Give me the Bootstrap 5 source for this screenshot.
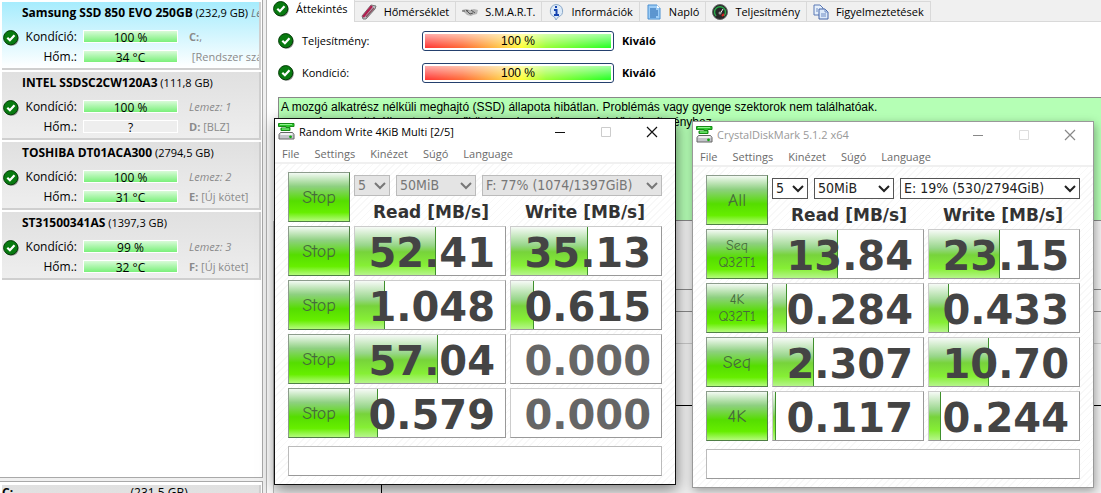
<!DOCTYPE html>
<html lang="hu">
<head>
<meta charset="utf-8">
<meta name="viewport" content="width=device-width, initial-scale=1">
<title>Hard Disk Sentinel – CrystalDiskMark</title>
<link href="https://cdn.jsdelivr.net/npm/bootstrap@5.3.0/dist/css/bootstrap.min.css" rel="stylesheet">
<style>
body{font-family:"Open Sans","Noto Sans",sans-serif;font-size:12px;line-height:16px;color:#000;background:#f0f0f0}
.ic{width:16px;height:16px;flex:none;display:block}
/* sidebar */
.side{width:263px;flex:none;gap:3px}
.pane{background:#fff;border:solid #a9a9a9;border-width:0 1px 1px 0}
.pane-top{padding-top:2px}
.pane-low{height:12px;border-width:1px 1px 0 0;padding:3px 1px 0 2px}
.drive{height:68px;background:linear-gradient(#e0e0e0,#eee);border:solid #cfcfcf;border-width:0 2px 2px 0;margin:0 1px 2px 2px;padding-top:3px}
.drive.active{background:linear-gradient(#a6ecfd,#fff)}
.drive-name{padding-left:20px;font-size:11px}
.drive-name b{font-size:12px}
.drive-grid{display:grid;grid-template-columns:16px 56px 100px 1fr;column-gap:2px;row-gap:4px;margin-top:8px;padding-left:1px}
.drive-grid .ic{grid-row:1/3;margin-top:1px}
.drive-grid .lbl{text-align:right}
.drive-grid .val{color:#8a8a8a;padding-left:8px;font-size:11px}
.bar{height:13px;margin:1px 1px 2px 4px;line-height:14px;text-align:center;background:linear-gradient(#d8fbd8,#7af07a);border:1px solid #fff}
.bar.unknown{background:#eee}
/* main */
.main{border-left:1px solid #b4b4b4;margin-left:3px;background:#fff}
.tabs{background:#f0f0f0;height:22px;border-bottom:1px solid #d9d9d9;font-size:11px}
.tabs a{color:#000;text-decoration:none;border:solid #d9d9d9;border-width:1px 1px 0 0;margin-top:1px;padding:0 6px;gap:7px}
.tabs a.on{background:#fff;margin:0 0 -1px;border-top:0;padding:0 6px 4px}
.health{display:grid;grid-template-columns:16px 112px 192px auto;column-gap:8px;row-gap:12px;padding:9px 0 0 11px;align-items:center;justify-content:start;font-size:11px}
.rate{height:20px;border:1px solid #24406e;border-radius:3px;padding:2px;background:#fff}
.rate div{height:14px;text-align:center;font:12px/14px "Liberation Sans",sans-serif;background:linear-gradient(rgba(255,255,255,.6),rgba(255,255,255,0)),linear-gradient(90deg,#f33,#ff6a33 20%,#fc4 42%,#ff3 52%,#9f3 65%,#2f2)}
.note{margin:14px 0 0 11px;height:124px;border:1px solid #888;border-right:0;background:#b5ffb5;font-family:"Liberation Sans",sans-serif;font-size:12px;line-height:15px;padding:2px 0 0 2px;white-space:nowrap}
.note .second{width:434px;text-align:right;margin:0}
.rest{background:#f0f0f0;margin-left:6px;border-left:1px solid #bbb}
.band{border-bottom:1px solid #888}
.band-1{height:69px}.band-2{height:22px}.band-3{height:32px;border-color:#c8c8c8}.band-4{height:62px;border-color:#000}
.plot{margin-left:107px;border-left:1px solid #000}
/* floating windows */
.win{position:absolute;width:402px;background:#fff;border:1px solid #111;box-shadow:1px 4px 14px rgba(0,0,0,.5)}
.win-a{left:274px;top:118px}
.win-b{left:692px;top:121px;border-color:#999;box-shadow:1px 3px 9px rgba(0,0,0,.35)}
.titlebar{height:25px;padding-left:3px;font-size:11px}
.titlebar button{width:46px;height:25px;border:0;background:none;padding:0;color:inherit}
.titlebar svg{display:block;margin:auto}
.win-b .titlebar{color:#999}
.menus{height:20px;border-bottom:2px solid #f0f0f0;gap:15px;padding:2px 0 0 7px;font-size:11px}
.menus a{color:#6b6b6b;text-decoration:none}
.bench{padding:8px 13px;background:repeating-linear-gradient(135deg,#fff 0 4px,#f8f8f8 4px 5px)}
.bench-grid{display:grid;grid-template-columns:62px 1fr 1fr;gap:4px;grid-auto-rows:50px}
.go{border:1px solid;border-color:#8c9c8c #4f7f45 #4f7f45 #8c9c8c;background:linear-gradient(#f3faf3,#8ed080 28%,#5d0 58%,#6e0 82%,#b4fb7c);font-family:"Comic Sans MS","Comic Neue","Noto Sans",sans-serif;font-size:18px;line-height:17px;color:#476a3c;padding:0}
.go.two{font-size:14px}
.head{grid-column:2/4;padding-top:3px}
.head .opts{gap:6px}
.head select{height:21px;min-height:0;border:1px solid #555;border-radius:0;padding:0 16px 0 3px;font-family:"DejaVu Sans Condensed","Noto Sans",sans-serif;font-size:14px;line-height:19px;color:#222;background:#fff url("data:image/svg+xml,%3Csvg xmlns='http://www.w3.org/2000/svg' viewBox='0 0 12 8'%3E%3Cpath d='M1 1l5 5 5-5' fill='none' stroke='%23222' stroke-width='2'/%3E%3C/svg%3E") no-repeat right 3px center/12px 8px}
.head select:disabled{border-color:#bbb;color:#777;opacity:1;background-color:#e4e4e4;background-image:url("data:image/svg+xml,%3Csvg xmlns='http://www.w3.org/2000/svg' viewBox='0 0 12 8'%3E%3Cpath d='M1 1l5 5 5-5' fill='none' stroke='%23777' stroke-width='2'/%3E%3C/svg%3E")}
.head .s1{width:36px}.head .s2{width:80px}
.unit{font:bold 17px/24px "DejaVu Sans",Verdana,sans-serif;color:#333;text-align:center;padding-top:4px}
.cell{border:1px solid;border-color:#ccc #999 #999 #ccc;background:#fff;display:grid;grid-template-rows:48px}
.cell>*{grid-area:1/1}
.fill{background:linear-gradient(#f6faf6,#98d68a 38%,#77d33b 52%,#86ef35 80%,#b5f58a);border-right:1px solid #3f8f2c}
.num{font:bold 40px/52px "DejaVu Sans",Verdana,sans-serif;color:#444;text-align:right;padding-right:10px}
.num.off{color:#666}
.cmt{display:block;width:100%;height:30px;margin:8px 0 0;border:1px solid #bbb;border-bottom-color:#999;border-radius:0;background:#fff}
</style>
</head>
<body class="vh-100 overflow-hidden position-relative">
<svg width="0" height="0" class="position-absolute">
 <symbol id="ok" viewBox="0 0 16 16"><circle cx="8.600" cy="8.600" r="7.200" fill="#8a8a8a"/><circle cx="7.700" cy="7.700" r="7.100" fill="#087a10" stroke="#033d06"/><path d="M4.300 7.800l2.600 2.500 4.600-5" fill="none" stroke="#fff" stroke-width="2.200"/></symbol>
 <symbol id="cdm" viewBox="0 0 17 17"><path d="M0.500 .5h15.500v3h-4v1h-4v-1h-7.500z" fill="#2ec82e" stroke="#178a17"/><path d="M3 5h9v2.500H3z" fill="#2ec82e" stroke="#178a17"/><path d="M2 1.500h12M4 6h7" stroke="#8df58d"/><path d="M2.500 9.500h12l1.500 2v4.500H1v-4.500z" fill="#c4c4ca" stroke="#666"/><path d="M2.500 11h12" stroke="#fff" stroke-width="1.500"/><circle cx="12.500" cy="13.800" r="1.400" fill="#1a1"/></symbol>
</svg>

<div class="d-flex h-100">
 <aside class="side d-flex flex-column">
  <div class="pane pane-top flex-grow-1 overflow-hidden">
   <section class="drive active overflow-hidden text-nowrap">
    <div class="drive-name"><b>Samsung SSD 850 EVO 250GB</b> (232,9 GB) <i class="text-secondary">Lemez: 0</i></div>
    <div class="drive-grid"><svg class="ic"><use href="#ok"/></svg><span class="lbl">Kondíció:</span><div class="bar">100 %</div><span class="val"><b>C:</b>,</span>
    <span class="lbl">Hőm.:</span><div class="bar">34 °C</div><span class="val">&nbsp;[Rendszer számára]</span></div>
   </section>
   <section class="drive text-nowrap">
    <div class="drive-name"><b>INTEL SSDSC2CW120A3</b> (111,8 GB)</div>
    <div class="drive-grid"><svg class="ic"><use href="#ok"/></svg><span class="lbl">Kondíció:</span><div class="bar">100 %</div><i class="val">Lemez: 1</i>
    <span class="lbl">Hőm.:</span><div class="bar unknown">?</div><span class="val"><b>D:</b> [BLZ]</span></div>
   </section>
   <section class="drive text-nowrap">
    <div class="drive-name"><b>TOSHIBA DT01ACA300</b> (2794,5 GB)</div>
    <div class="drive-grid"><svg class="ic"><use href="#ok"/></svg><span class="lbl">Kondíció:</span><div class="bar">100 %</div><i class="val">Lemez: 2</i>
    <span class="lbl">Hőm.:</span><div class="bar">31 °C</div><span class="val"><b>E:</b> [Új kötet]</span></div>
   </section>
   <section class="drive text-nowrap">
    <div class="drive-name"><b>ST31500341AS</b> (1397,3 GB)</div>
    <div class="drive-grid"><svg class="ic"><use href="#ok"/></svg><span class="lbl">Kondíció:</span><div class="bar">99 %</div><i class="val">Lemez: 3</i>
    <span class="lbl">Hőm.:</span><div class="bar">32 °C</div><span class="val"><b>F:</b> [Új kötet]</span></div>
   </section>
  </div>
  <div class="pane pane-low overflow-hidden flex-shrink-0"><div class="drive m-0 pt-0 d-flex"><b class="w-50">C:</b><span>(231,5 GB)</span></div></div>
 </aside>

 <main class="main flex-grow-1 d-flex flex-column overflow-hidden">
  <nav class="tabs d-flex flex-shrink-0">
   <a href="#" class="on d-flex align-items-center"><svg class="ic"><use href="#ok"/></svg>Áttekintés</a>
   <a href="#" class="d-flex align-items-center"><svg class="ic" viewBox="0 0 16 16"><path d="M2 15l-1-3L10 1l5 1-1 3L5 15z" fill="#b8c0c4" stroke="#777"/><path d="M2 13L11 2" stroke="#b02050" stroke-width="2.500"/><path d="M5 13l8-9" stroke="#8a5060" stroke-width="1.500"/></svg>Hőmérséklet</a>
   <a href="#" class="d-flex align-items-center"><svg class="ic" viewBox="0 0 16 16"><path d="M0 6l4-1 4 1 4-1 4 1-1 4-4 1-2 1-4-1-2-2z" fill="#b5b5b5"/><path d="M4 6l4 4 3-1M9 6l4 3M0 7h3M6 6l-1 2" fill="none" stroke="#555"/></svg>S.M.A.R.T.</a>
   <a href="#" class="d-flex align-items-center"><svg class="ic" viewBox="0 0 16 16"><path d="M8 .5a7 6.500 0 0 1 2 12.600L8 16l-1.500-3A6.500 6.500 0 0 1 8 .5z" fill="#dceaf8" stroke="#8aa8c8"/><path d="M7 3h2M6 6h2.500v5M6 11h5" stroke="#1544b0" stroke-width="2" fill="none"/></svg>Információk</a>
   <a href="#" class="d-flex align-items-center"><svg class="ic" viewBox="0 0 16 16"><path d="M2 1h9l3 3v11H2z" fill="#9dcdf7" stroke="#4a8fd0"/><path d="M4 5h6M4 7h8M4 9h8M4 11h8M4 13h6" stroke="#1d5fa8"/><path d="M11 1v3h3" fill="#fff"/></svg>Napló</a>
   <a href="#" class="d-flex align-items-center"><svg class="ic" viewBox="0 0 16 16"><circle cx="8" cy="8" r="7.500" fill="#262626" stroke="#666"/><path d="M4 12a5.500 5.500 0 1 1 8 0" fill="none" stroke="#2aa84a" stroke-width="1.500"/><path d="M8 10l3-5" stroke="#eee"/><path d="M10 12l2-2" stroke="#d22" stroke-width="2"/><circle cx="8" cy="9" r="1.500" fill="#999"/></svg>Teljesítmény</a>
   <a href="#" class="d-flex align-items-center"><svg class="ic" viewBox="0 0 16 16"><path d="M1 1h6l3 3v7H1z" fill="#e6f0fb" stroke="#5b78b5"/><path d="M6 5h6l3 3v7H6z" fill="#dce9f9" stroke="#4565a8"/><path d="M12 5v3h3M8 10h5M8 12h5M3 5h2M3 7h2" fill="none" stroke="#6e8cc4"/></svg>Figyelmeztetések</a>
  </nav>
  <div class="health">
   <svg class="ic"><use href="#ok"/></svg><span>Teljesítmény:</span><div class="rate"><div>100 %</div></div><b>Kiváló</b>
   <svg class="ic"><use href="#ok"/></svg><span>Kondíció:</span><div class="rate"><div>100 %</div></div><b>Kiváló</b>
  </div>
  <div class="note flex-shrink-0">A mozgó alkatrész nélküli meghajtó (SSD) állapota hibátlan. Problémás vagy gyenge szektorok nem találhatóak.
   <p class="second">A meghajtó állapota és a működése elegendő a megfelelő teljesítményhez.</p></div>
  <div class="rest flex-grow-1 d-flex flex-column">
   <div class="band band-1"></div>
   <div class="band band-2"></div>
   <div class="band band-3"></div>
   <div class="band band-4"></div>
   <div class="plot flex-grow-1"></div>
  </div>
 </main>
</div>

<section class="win win-a">
 <header class="titlebar d-flex align-items-center"><svg class="me-1" width="17" height="17"><use href="#cdm"/></svg><span class="flex-grow-1">Random Write 4KiB Multi [2/5]</span>
  <button aria-label="Minimize"><svg width="12" height="12"><path d="M1 6.500h10" stroke="#111"/></svg></button><button aria-label="Maximize" disabled><svg width="12" height="12"><path d="M1.500 1.500h9v9h-9z" fill="none" stroke="#ccc"/></svg></button><button aria-label="Close"><svg width="12" height="12"><path d="M1 1l10 10M11 1L1 11" stroke="#111" stroke-width="1.200"/></svg></button></header>
 <nav class="menus d-flex align-items-center"><a href="#">File</a><a href="#">Settings</a><a href="#">Kinézet</a><a href="#">Súgó</a><a href="#">Language</a></nav>
 <div class="bench"><div class="bench-grid">
  <button class="go">Stop</button>
  <div class="head"><div class="opts d-flex"><select class="form-select s1" aria-label="Count" disabled><option>5</option></select><select class="form-select s2" aria-label="Size" disabled><option>50MiB</option></select><select class="form-select flex-fill w-auto" aria-label="Drive" disabled><option>F: 77% (1074/1397GiB)</option></select></div>
   <div class="d-flex"><div class="unit w-50">Read [MB/s]</div><div class="unit w-50">Write [MB/s]</div></div></div>
  <button class="go">Stop</button><div class="cell"><div class="fill" style="width:54%"></div><div class="num">52.41</div></div><div class="cell"><div class="fill" style="width:51%"></div><div class="num">35.13</div></div>
  <button class="go">Stop</button><div class="cell"><div class="fill" style="width:20%"></div><div class="num">1.048</div></div><div class="cell"><div class="fill" style="width:15%"></div><div class="num">0.615</div></div>
  <button class="go">Stop</button><div class="cell"><div class="fill" style="width:55%"></div><div class="num">57.04</div></div><div class="cell"><div class="num off">0.000</div></div>
  <button class="go">Stop</button><div class="cell"><div class="fill" style="width:15%"></div><div class="num">0.579</div></div><div class="cell"><div class="num off">0.000</div></div>
 </div><input class="cmt" aria-label="Comment"></div>
</section>

<section class="win win-b">
 <header class="titlebar d-flex align-items-center"><svg class="me-1" width="17" height="17"><use href="#cdm"/></svg><span class="flex-grow-1">CrystalDiskMark 5.1.2 x64</span>
  <button aria-label="Minimize"><svg width="12" height="12"><path d="M1 6.500h10" stroke="#888"/></svg></button><button aria-label="Maximize" disabled><svg width="12" height="12"><path d="M1.500 1.500h9v9h-9z" fill="none" stroke="#ddd"/></svg></button><button aria-label="Close"><svg width="12" height="12"><path d="M1 1l10 10M11 1L1 11" stroke="#888" stroke-width="1.200"/></svg></button></header>
 <nav class="menus d-flex align-items-center"><a href="#">File</a><a href="#">Settings</a><a href="#">Kinézet</a><a href="#">Súgó</a><a href="#">Language</a></nav>
 <div class="bench"><div class="bench-grid">
  <button class="go">All</button>
  <div class="head"><div class="opts d-flex"><select class="form-select s1" aria-label="Count"><option>5</option></select><select class="form-select s2" aria-label="Size"><option>50MiB</option></select><select class="form-select flex-fill w-auto" aria-label="Drive"><option>E: 19% (530/2794GiB)</option></select></div>
   <div class="d-flex"><div class="unit w-50">Read [MB/s]</div><div class="unit w-50">Write [MB/s]</div></div></div>
  <button class="go two">Seq<br>Q32T1</button><div class="cell"><div class="fill" style="width:43%"></div><div class="num">13.84</div></div><div class="cell"><div class="fill" style="width:47%"></div><div class="num">23.15</div></div>
  <button class="go two">4K<br>Q32T1</button><div class="cell"><div class="fill" style="width:9%"></div><div class="num">0.284</div></div><div class="cell"><div class="fill" style="width:13%"></div><div class="num">0.433</div></div>
  <button class="go">Seq</button><div class="cell"><div class="fill" style="width:27%"></div><div class="num">2.307</div></div><div class="cell"><div class="fill" style="width:40%"></div><div class="num">10.70</div></div>
  <button class="go">4K</button><div class="cell"><div class="fill" style="width:2%"></div><div class="num">0.117</div></div><div class="cell"><div class="fill" style="width:8%"></div><div class="num">0.244</div></div>
 </div><input class="cmt" aria-label="Comment"></div>
</section>
<script src="https://cdn.jsdelivr.net/npm/bootstrap@5.3.0/dist/js/bootstrap.bundle.min.js"></script>
</body>
</html>
